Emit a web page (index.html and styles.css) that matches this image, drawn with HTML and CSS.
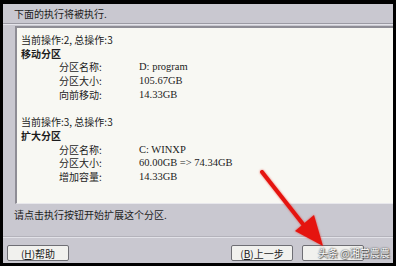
FILE: index.html
```html
<!DOCTYPE html>
<html lang="zh-CN">
<head>
    <meta charset="UTF-8">
    <title>执行操作</title>
    <link rel="stylesheet" href="styles.css">
</head>
<body>
    <div class="window">
        <div class="title">下面的执行将被执行.</div>
        <div class="panel">
            <div class="line">当前操作:2, 总操作:3</div>
            <div class="line bold">移动分区</div>
            <div class="row"><span class="label">分区名称:</span><span class="value">D: program</span></div>
            <div class="row"><span class="label">分区大小:</span><span class="value">105.67GB</span></div>
            <div class="row"><span class="label">向前移动:</span><span class="value">14.33GB</span></div>
            <div class="line"></div>
            <div class="line">当前操作:3, 总操作:3</div>
            <div class="line bold">扩大分区</div>
            <div class="row"><span class="label">分区名称:</span><span class="value">C: WINXP</span></div>
            <div class="row"><span class="label">分区大小:</span><span class="value">60.00GB =&gt; 74.34GB</span></div>
            <div class="row"><span class="label">增加容量:</span><span class="value">14.33GB</span></div>
        </div>
        <div class="hint">请点击执行按钮开始扩展这个分区.</div>
        <div class="footer">
            <button class="btn">(<u>H</u>)帮助</button>
            <div class="spacer"></div>
            <button class="btn">(<u>B</u>)上一步</button>
            <button class="btn"></button>
        </div>
    </div>

    <!-- annotation drawn over the screenshot -->
    <svg class="arrow" width="396" height="266" viewBox="0 0 396 266">
        <line x1="262" y1="172" x2="306" y2="228" stroke="#e5140f" stroke-width="4" stroke-linecap="round"/>
        <polygon points="323,246 295,231 314,215" fill="#e5140f"/>
    </svg>
    <div class="watermark">头条 @湘當農農</div>
</body>
</html>
```

FILE: styles.css
```css
body {
    margin: 0;
    padding: 4px 3px 3px 3px;
    background-color: #000;
    font-family: "Noto Sans CJK SC", sans-serif;
    font-size: 10px;
    color: #1c1c1c;
}
.window {
    width: 390px;
    height: 259px;
    background-color: #c9c8d0;
    display: flex;
    flex-direction: column;
}
.title {
    height: 19px;
    line-height: 20px;
    padding-left: 11px;
    border-bottom: 1px solid #9b9aa3;
    box-shadow: 0 1px 0 #e4e4ea;
}
.panel {
    margin: 2px 0 0 12px;
    height: 170px;
    padding: 5px 0 0 4px;
    background-color: #f8f8f3;
    border-top: 2px solid #8e8d95;
    border-left: 2px solid #8e8d95;
    border-bottom: 1px solid #e8e8ec;
}
.line, .row {
    height: 13.7px;
    line-height: 13.7px;
    white-space: nowrap;
}
.bold {
    font-weight: bold;
}
.row {
    display: flex;
}
.label {
    width: 80px;
    padding-left: 38px;
}
.value {
    font-family: "Liberation Serif", serif;
    font-size: 10.5px;
}
.hint {
    padding-left: 11px;
    margin-top: 4px;
    height: 28px;
    line-height: 14px;
    border-bottom: 1px solid #b4b3bb;
    box-shadow: 0 1px 0 #e2e2e8;
}
.footer {
    display: flex;
    align-items: flex-start;
    padding: 8px 29px 0 4px;
    gap: 9px;
}
.spacer {
    flex: 1;
}
.btn {
    width: 62px;
    height: 16px;
    padding: 0;
    font-family: "Noto Sans CJK SC", sans-serif;
    font-size: 10px;
    line-height: 13px;
    color: #1c1c1c;
    background-color: #f1f1ee;
    border: 1px solid #6e6e74;
    border-radius: 2px;
}
.arrow {
    position: absolute;
    left: 0;
    top: 0;
    filter: drop-shadow(0 0 1px rgba(230, 40, 30, 0.7));
}
.watermark {
    position: absolute;
    left: 318px;
    top: 247px;
    font-size: 10px;
    line-height: 12px;
    color: #fff;
    text-shadow: 0 0 1px #444, 0 0 2px #666, 1px 1px 1px #555;
}
```
